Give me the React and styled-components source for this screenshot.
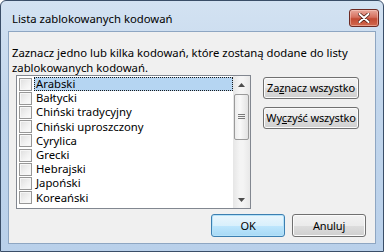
import React from "react";
import styled, { createGlobalStyle } from "styled-components";

const Global = createGlobalStyle`
  html, body { margin: 0; padding: 0; background: #fff; }
  body { font-family: "Noto Sans", "Open Sans", sans-serif; font-size: 11.3px; color: #000; }
`;

const items = [
  "Arabski",
  "Bałtycki",
  "Chiński tradycyjny",
  "Chiński uproszczony",
  "Cyrylica",
  "Grecki",
  "Hebrajski",
  "Japoński",
  "Koreański",
];

const Window = styled.div`
  width: 384px;
  height: 252px;
  box-sizing: border-box;
  border: 1px solid #3a4e68;
  border-radius: 6px 6px 0 0;
  background: linear-gradient(180deg, #d3e2f2 0%, #c2d6ec 40%, #b9d0ea 100%);
  display: flex;
  flex-direction: column;
  padding: 0 7px 7px 7px;
  overflow: hidden;
`;

const TitleBar = styled.div`
  height: 30px;
  display: flex;
  align-items: flex-start;
  justify-content: space-between;
`;

const Title = styled.div`
  margin: 10px 0 0 4px;
  color: #000;
  white-space: nowrap;
`;

const CloseButton = styled.div`
  margin: 8px -3px 0 0;
  width: 30px;
  height: 18px;
  box-sizing: border-box;
  border: 1px solid #6d2a23;
  border-radius: 3px;
  background: linear-gradient(180deg, #e9a99c 0%, #d6705e 45%, #c24a33 55%, #d2694e 100%);
  display: flex;
  align-items: center;
  justify-content: center;
  box-shadow: inset 0 0 0 1px rgba(255, 220, 210, 0.45);
`;

const Client = styled.div`
  flex: 1;
  box-sizing: border-box;
  border: 1px solid #8ea6c2;
  background: #f0f0f0;
  display: flex;
  flex-direction: column;
  padding: 13px 9px 0 3px;
`;

const Message = styled.div`
  line-height: 15px;
  white-space: nowrap;
`;

const Body = styled.div`
  display: flex;
  margin-top: 0;
  padding-left: 4px;
`;

const ListBox = styled.div`
  width: 235px;
  height: 134px;
  box-sizing: border-box;
  border: 1px solid #828790;
  background: #fff;
  display: flex;
`;

const Rows = styled.div`
  flex: 1;
  padding-top: 1px;
`;

const Row = styled.div`
  height: 14.2px;
  display: flex;
  align-items: center;
  padding-left: 2px;
`;

const Check = styled.span`
  width: 13px;
  height: 13px;
  box-sizing: border-box;
  border: 1px solid #979797;
  background: linear-gradient(135deg, #dedede 0%, #f2f2f2 60%, #fcfcfc 100%);
  box-shadow: inset 0 0 0 1px #f6f6f6;
  flex: none;
`;

const Label = styled.span`
  margin-left: 2px;
  height: 14px;
  line-height: 12px;
  box-sizing: border-box;
  padding: 0 1px;
  flex: ${(p) => (p.$selected ? 1 : "none")};
  background: ${(p) => (p.$selected ? "#b5d5f2" : "transparent")};
  border: 1px ${(p) => (p.$selected ? "dotted #1a1a1a" : "solid transparent")};
  white-space: nowrap;
`;

const ScrollBar = styled.div`
  width: 17px;
  display: flex;
  flex-direction: column;
  background: linear-gradient(90deg, #e6e6e6, #f4f4f4 40%, #f4f4f4 60%, #e8e8e8);
`;

const Arrow = styled.div`
  height: 17px;
  display: flex;
  align-items: center;
  justify-content: center;
`;

const Thumb = styled.div`
  margin: 1px 1px 0 1px;
  height: 46px;
  box-sizing: border-box;
  border: 1px solid #9a9a9a;
  border-radius: 2px;
  background: linear-gradient(90deg, #ececec, #f9f9f9 40%, #e2e2e2);
  display: flex;
  align-items: center;
  justify-content: center;
`;

const Track = styled.div`
  flex: 1;
`;

const Side = styled.div`
  display: flex;
  flex-direction: column;
  gap: 8px;
  margin: 2px 0 0 12px;
`;

const Button = styled.button`
  font-family: inherit;
  font-size: 11px;
  letter-spacing: -0.15px;
  color: #000;
  width: ${(p) => p.$w || 96}px;
  height: ${(p) => p.$h || 22}px;
  padding: 0;
  box-sizing: border-box;
  border: 1px solid ${(p) => (p.$default ? "#3c7fb1" : "#707070")};
  border-radius: 3px;
  background: ${(p) =>
    p.$default
      ? "linear-gradient(180deg, #eaf6fd 0%, #d9f0fc 50%, #bee6fd 51%, #a7d9f5 100%)"
      : "linear-gradient(180deg, #f2f2f2 0%, #ebebeb 50%, #dddddd 51%, #cfcfcf 100%)"};
  box-shadow: inset 0 0 0 1px ${(p) => (p.$default ? "#b5e2f9" : "#fbfbfb")};
  line-height: 18px;
  white-space: nowrap;
`;

const Footer = styled.div`
  display: flex;
  justify-content: flex-end;
  gap: 7px;
  margin-top: 5px;
  padding-right: 0;
`;

const U = styled.span`
  text-decoration: underline;
`;

const Tri = ({ up }) => (
  <svg width="7" height="4" viewBox="0 0 7 4">
    <path d={up ? "M0 4 L3.5 0 L7 4 Z" : "M0 0 L3.5 4 L7 0 Z"} fill="#4d4d4d" />
  </svg>
);

export default function App() {
  return (
    <>
      <Global />
      <Window>
        <TitleBar>
          <Title>Lista zablokowanych kodowań</Title>
          <CloseButton>
            <svg width="12" height="10" viewBox="0 0 12 10">
              <path d="M1.5 1 L10.5 9 M10.5 1 L1.5 9" stroke="#4a1a12" strokeWidth="3.4" strokeLinecap="round" />
              <path d="M1.5 1 L10.5 9 M10.5 1 L1.5 9" stroke="#fff" strokeWidth="2" strokeLinecap="round" />
            </svg>
          </CloseButton>
        </TitleBar>
        <Client>
          <Message>
            Zaznacz jedno lub kilka kodowań, które zostaną dodane do listy
            <br />
            zablokowanych kodowań.
          </Message>
          <Body>
            <ListBox>
              <Rows>
                {items.map((it, i) => (
                  <Row key={it}>
                    <Check />
                    <Label $selected={i === 0}>{it}</Label>
                  </Row>
                ))}
              </Rows>
              <ScrollBar>
                <Arrow><Tri up /></Arrow>
                <Thumb>
                  <svg width="7" height="6" viewBox="0 0 7 6">
                    <path d="M0 0.5 H7 M0 2.5 H7 M0 4.5 H7" stroke="#7a7a7a" strokeWidth="1" />
                  </svg>
                </Thumb>
                <Track />
                <Arrow><Tri /></Arrow>
              </ScrollBar>
            </ListBox>
            <Side>
              <Button>Za<U>z</U>nacz wszystko</Button>
              <Button>Wy<U>c</U>zyść wszystko</Button>
            </Side>
          </Body>
          <Footer>
            <Button $default $w={74} $h={23}>OK</Button>
            <Button $w={74} $h={23}>Anuluj</Button>
          </Footer>
        </Client>
      </Window>
    </>
  );
}
